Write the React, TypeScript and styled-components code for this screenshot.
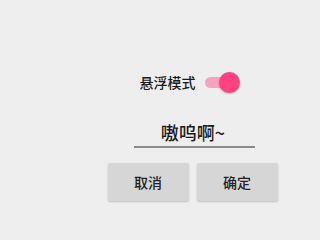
import React from 'react'
import styled, { createGlobalStyle } from 'styled-components'

const GlobalStyle = createGlobalStyle`
  html, body {
    margin: 0;
    padding: 0;
    background: #eeeeee;
  }
  body {
    font-family: "Noto Sans CJK SC", "Noto Sans", sans-serif;
    color: #212121;
  }
`

const Page = styled.div`
  width: 320px;
  height: 235px;
  box-sizing: border-box;
  padding: 72px 0 0 107px;
  background: #eeeeee;
`

const Panel = styled.div`
  width: 171px;
  display: flex;
  flex-direction: column;
  align-items: center;
`

const SwitchRow = styled.div`
  display: flex;
  align-items: center;
  gap: 9px;
  height: 20px;
  margin-right: 6px;
`

const Label = styled.span`
  font-size: 14px;
  font-weight: 500;
  line-height: 20px;
  color: #1a1a1a;
`

const Track = styled.div`
  position: relative;
  width: 30px;
  height: 11px;
  border-radius: 6px;
  background: #f7a2c0;
  margin-right: 5px;
`

const Thumb = styled.div`
  position: absolute;
  top: -5px;
  right: -5px;
  width: 21px;
  height: 21px;
  border-radius: 50%;
  background: #ff4081;
  box-shadow: 0 1px 2px rgba(0, 0, 0, 0.25);
`

const Field = styled.div`
  margin-top: 29px;
  width: 121px;
  margin-left: 3px;
  border-bottom: 2px solid #8a8a8a;
  display: flex;
  justify-content: center;
  padding-bottom: 3px;
`

const FieldText = styled.span`
  font-size: 18px;
  font-weight: 500;
  line-height: 22px;
  color: #1a1a1a;
  padding-right: 2px;
`

const Buttons = styled.div`
  margin-top: 15px;
  display: flex;
  gap: 8px;
`

const Button = styled.button`
  width: 81px;
  height: 38px;
  border: none;
  border-radius: 2px;
  background: #d6d6d6;
  box-shadow: 0 1px 2px rgba(0, 0, 0, 0.2);
  font-family: "Noto Sans CJK SC", "Noto Sans", sans-serif;
  font-size: 14px;
  font-weight: 500;
  color: #222;
  padding: 0;
`

export default function App() {
  return (
    <Page>
      <GlobalStyle />
      <Panel>
        <SwitchRow>
          <Label>悬浮模式</Label>
          <Track>
            <Thumb />
          </Track>
        </SwitchRow>
        <Field>
          <FieldText>嗷呜啊~</FieldText>
        </Field>
        <Buttons>
          <Button>取消</Button>
          <Button>确定</Button>
        </Buttons>
      </Panel>
    </Page>
  )
}
